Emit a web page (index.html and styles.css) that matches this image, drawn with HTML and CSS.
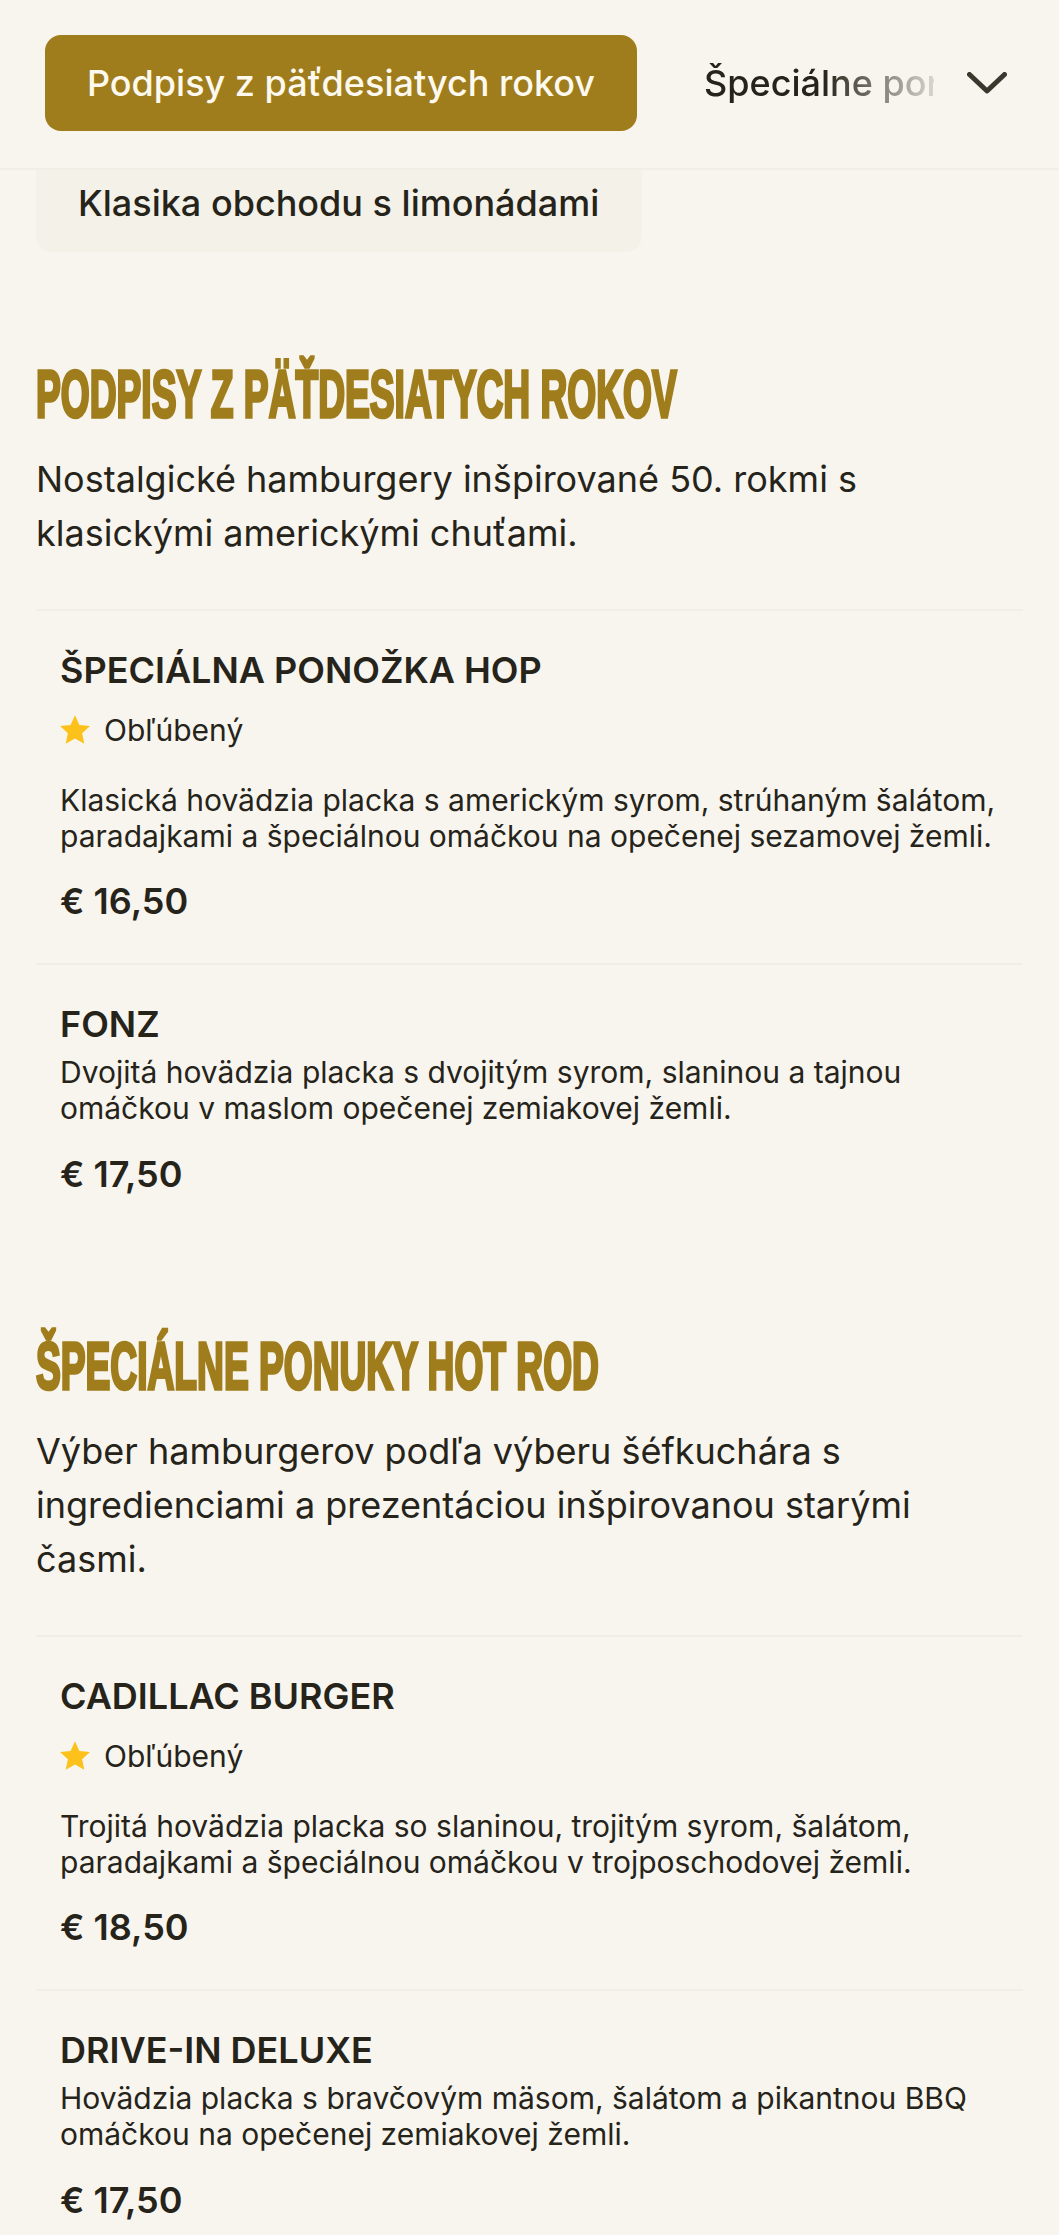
FILE: index.html
```html
<!DOCTYPE html>
<html lang="sk">
<head>
<meta charset="utf-8">
<title>Menu</title>
<link rel="stylesheet" href="styles.css">
</head>
<body>
<header class="tabs">
  <button class="tab-active">Podpisy z päťdesiatych rokov</button>
  <span class="tab-next"><span class="tab-next-text">Špeciálne ponuky</span></span>
  <svg class="chevron" viewBox="0 0 40 22" width="40" height="22" aria-hidden="true"><path d="M2.5 2.5 L20 19 L37.5 2.5" fill="none" stroke="#3a372c" stroke-width="5" stroke-linecap="round" stroke-linejoin="round"/></svg>
</header>
<main class="content">
  <div class="tab-under">Klasika obchodu s limonádami</div>

  <section class="section first">
    <h2 class="section-title"><span>PODPISY Z PÄŤDESIATYCH ROKOV</span></h2>
    <p class="section-desc">Nostalgické hamburgery inšpirované 50. rokmi s klasickými americkými chuťami.</p>
    <article class="item">
      <h3 class="item-name">ŠPECIÁLNA PONOŽKA HOP</h3>
      <div class="badge"><svg class="star" viewBox="0.4 0.8 23.2 23" width="30" height="30" aria-hidden="true"><path d="M12 .8l3.4 7.6 8.2.9-6.1 5.5 1.7 8.1L12 18.8l-7.2 4.1 1.7-8.1L.4 9.3l8.2-.9z" fill="#fcc21b"/></svg><span>Obľúbený</span></div>
      <p class="item-desc">Klasická hovädzia placka s americkým syrom, strúhaným šalátom, paradajkami a špeciálnou omáčkou na opečenej sezamovej žemli.</p>
      <div class="price">€ 16,50</div>
    </article>
    <article class="item">
      <h3 class="item-name">FONZ</h3>
      <p class="item-desc tight">Dvojitá hovädzia placka s dvojitým syrom, slaninou a tajnou omáčkou v maslom opečenej zemiakovej žemli.</p>
      <div class="price">€ 17,50</div>
    </article>
  </section>

  <section class="section">
    <h2 class="section-title"><span>ŠPECIÁLNE PONUKY HOT ROD</span></h2>
    <p class="section-desc">Výber hamburgerov podľa výberu šéfkuchára s ingredienciami a prezentáciou inšpirovanou starými časmi.</p>
    <article class="item">
      <h3 class="item-name">CADILLAC BURGER</h3>
      <div class="badge"><svg class="star" viewBox="0.4 0.8 23.2 23" width="30" height="30" aria-hidden="true"><path d="M12 .8l3.4 7.6 8.2.9-6.1 5.5 1.7 8.1L12 18.8l-7.2 4.1 1.7-8.1L.4 9.3l8.2-.9z" fill="#fcc21b"/></svg><span>Obľúbený</span></div>
      <p class="item-desc">Trojitá hovädzia placka so slaninou, trojitým syrom, šalátom, paradajkami a špeciálnou omáčkou v trojposchodovej žemli.</p>
      <div class="price">€ 18,50</div>
    </article>
    <article class="item">
      <h3 class="item-name">DRIVE-IN DELUXE</h3>
      <p class="item-desc tight">Hovädzia placka s bravčovým mäsom, šalátom a pikantnou BBQ omáčkou na opečenej zemiakovej žemli.</p>
      <div class="price">€ 17,50</div>
    </article>
  </section>
</main>
</body>
</html>
```
FILE: styles.css
```css
* { box-sizing: border-box; }
html, body { margin: 0; padding: 0; }
body {
  width: 1059px;
  height: 2235px;
  overflow: hidden;
  background: #f8f5ee;
  color: #26241a;
  font-family: Inter, "Noto Sans", sans-serif;
}
.tabs {
  display: flex;
  align-items: center;
  height: 170px;
  padding: 0 0 2px 45px;
  border-bottom: 2px solid #f1eee6;
}
.tab-active {
  width: 592px;
  height: 96px;
  border: 0;
  border-radius: 16px;
  background: #a07d1c;
  color: #fdf9ee;
  font: 500 36px/1 Inter, sans-serif;
}
.tab-next {
  width: 230px;
  margin-left: 67px;
  overflow: hidden;
  white-space: nowrap;
  font-size: 36px;
  font-weight: 500;
  line-height: 54px;
  -webkit-mask-image: linear-gradient(to right, #000 52%, rgba(0,0,0,.15) 100%);
  mask-image: linear-gradient(to right, #000 52%, rgba(0,0,0,.15) 100%);
}
.chevron { margin-left: 33px; flex: none; }
.content { padding: 0 36px; }
.tab-under {
  width: 606px;
  height: 82px;
  padding: 6px 0 0 42px;
  border-radius: 0 0 16px 16px;
  background: #f3f1e8;
  font-size: 36px;
  font-weight: 500;
  line-height: 54px;
}
.section { margin-top: 94px; }
.section.first { margin-top: 106px; }
.section-title {
  margin: 0;
  height: 72px;
  color: #a07d1c;
  font: 700 66px/72px "Liberation Sans", sans-serif;
  white-space: nowrap;
}
.section-title span {
  display: block;
  width: 100%;
  transform: scaleX(0.563);
  transform-origin: left center;
  -webkit-text-stroke: 3.5px #a07d1c;
}
.section-desc {
  margin: 22px 0 0;
  font-size: 36px;
  line-height: 54px;
  color: #26241a;
}
.item { border-top: 2px solid #f1eee6; padding: 35px 24px 38px; }
.section-desc + .item { margin-top: 49px; }
.item-name {
  margin: 0;
  font-size: 36px;
  line-height: 48px;
  font-weight: 600;
}
.badge {
  display: flex;
  align-items: center;
  gap: 14px;
  margin-top: 12px;
  font-size: 30px;
  line-height: 48px;
}
.star { flex: none; }
.item-desc {
  margin: 28px 0 0;
  font-size: 30px;
  line-height: 36px;
}
.item-desc.tight { margin-top: 6px; }
.price {
  margin-top: 23px;
  font-size: 36px;
  line-height: 48px;
  font-weight: 600;
}
.item-desc.tight + .price { margin-top: 24px; }
```
